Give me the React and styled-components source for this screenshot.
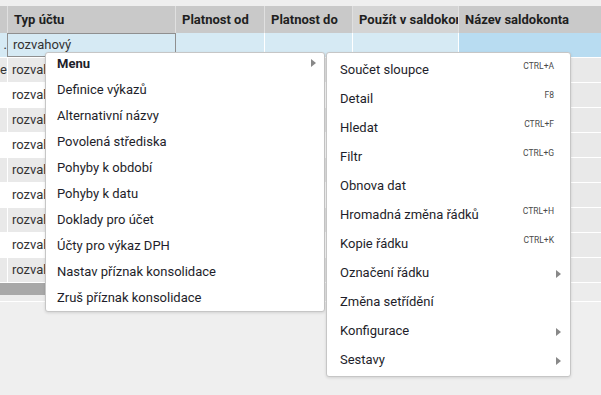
import React from 'react';
import styled, { createGlobalStyle } from 'styled-components';

const GlobalStyle = createGlobalStyle`
    html, body {
        margin: 0;
        padding: 0;
        background: #efefef;
    }
    body {
        font-family: Roboto, "Open Sans", "DejaVu Sans", sans-serif;
        font-size: 13px;
        color: #222;
    }
`;

const sloupce = [
    { id: 'c0', nazev: '', sirka: 8 },
    { id: 'typ', nazev: 'Typ účtu', sirka: 168 },
    { id: 'od', nazev: 'Platnost od', sirka: 89 },
    { id: 'do', nazev: 'Platnost do', sirka: 88 },
    { id: 'saldo', nazev: 'Použít v saldokontu', sirka: 106, svetly: true },
    { id: 'nazev', nazev: 'Název saldokonta', sirka: 0 },
];

const radky = [
    { c0: '.', typ: 'rozvahový' },
    { c0: 'e', typ: 'rozvahový' },
    { c0: '', typ: 'rozvahový' },
    { c0: '', typ: 'rozvahový' },
    { c0: '', typ: 'rozvahový' },
    { c0: '', typ: 'rozvahový' },
    { c0: '', typ: 'rozvahový' },
    { c0: '', typ: 'rozvahový' },
    { c0: '', typ: 'rozvahový' },
    { c0: '', typ: 'rozvahový' },
];

const menuLevo = [
    'Definice výkazů',
    'Alternativní názvy',
    'Povolená střediska',
    'Pohyby k období',
    'Pohyby k datu',
    'Doklady pro účet',
    'Účty pro výkaz DPH',
    'Nastav příznak konsolidace',
    'Zruš příznak konsolidace',
];

const menuPravo = [
    { text: 'Součet sloupce', zkratka: 'CTRL+A' },
    { text: 'Detail', zkratka: 'F8' },
    { text: 'Hledat', zkratka: 'CTRL+F' },
    { text: 'Filtr', zkratka: 'CTRL+G' },
    { text: 'Obnova dat' },
    { text: 'Hromadná změna řádků', zkratka: 'CTRL+H' },
    { text: 'Kopie řádku', zkratka: 'CTRL+K' },
    { text: 'Označení řádku', podmenu: true },
    { text: 'Změna setřídění' },
    { text: 'Konfigurace', podmenu: true },
    { text: 'Sestavy', podmenu: true },
];

const App = () => {
    return (
        <>
            <GlobalStyle />
            <Stranka>
                <Tabulka>
                    <Hlavicka>
                        {sloupce.map((s) => (
                            <HlavickaBunka
                                key={s.id}
                                $sirka={s.sirka}
                                $svetly={s.svetly}
                                $uzka={s.id === 'c0'}
                            >
                                {s.nazev}
                            </HlavickaBunka>
                        ))}
                    </Hlavicka>
                    {radky.map((r, i) => (
                        <Radek key={i} $vybrany={i === 0} $sudy={i % 2 === 1}>
                            {sloupce.map((s) => (
                                <Bunka
                                    key={s.id}
                                    $sirka={s.sirka}
                                    $posledni={s.id === 'nazev'}
                                    $zamereny={i === 0 && s.id === 'typ'}
                                    $vpravo={s.id === 'c0'}
                                >
                                    {r[s.id]}
                                </Bunka>
                            ))}
                        </Radek>
                    ))}
                    <Posuvnik>
                        <Jezdec />
                    </Posuvnik>
                </Tabulka>

                <MenuVrstva>
                    <Menu $sirka={280}>
                        <HlavniPolozka>
                            Menu
                            <Sipka $nahore />
                        </HlavniPolozka>
                        {menuLevo.map((t) => (
                            <Polozka key={t}>{t}</Polozka>
                        ))}
                    </Menu>
                    <Menu $sirka={245} $odsazeni>
                        {menuPravo.map((p) => (
                            <PolozkaVelka key={p.text}>
                                <span>{p.text}</span>
                                {p.zkratka && <Zkratka>{p.zkratka}</Zkratka>}
                                {p.podmenu && <Sipka />}
                            </PolozkaVelka>
                        ))}
                    </Menu>
                </MenuVrstva>
            </Stranka>
        </>
    );
}

const Stranka = styled.div`
    position: relative;
    width: 601px;
    height: 395px;
    overflow: hidden;
    background: #efefef;
    padding-top: 6px;
    box-sizing: border-box;
`;

const Tabulka = styled.div`
    display: flex;
    flex-direction: column;
`;

const Hlavicka = styled.div`
    display: flex;
    height: 27px;
    background: #c9c9c9;
`;

const HlavickaBunka = styled.div`
    flex: ${(p) => (p.$sirka ? `0 0 ${p.$sirka}px` : '1 1 auto')};
    min-width: 0;
    box-sizing: border-box;
    padding: ${(p) => (p.$uzka ? '0' : '1px 6px 0')};
    line-height: 26px;
    font-weight: bold;
    color: #1f1f1f;
    white-space: nowrap;
    overflow: hidden;
    border-right: 1px solid #e0e0e0;
    background: ${(p) => (p.$svetly ? '#d4d4d4' : 'transparent')};

    &:last-child {
        border-right: none;
    }
`;

const Radek = styled.div`
    display: flex;
    height: 25px;
    box-sizing: border-box;
    border-bottom: 1px solid #fff;
    background: ${(p) => (p.$vybrany ? '#d6eaf4' : p.$sudy ? '#e9e9e9' : '#fff')};
    --posledni: ${(p) => (p.$vybrany ? '#b8dcf1' : '#e9e9e9')};
`;

const Bunka = styled.div`
    flex: ${(p) => (p.$sirka ? `0 0 ${p.$sirka}px` : '1 1 auto')};
    min-width: 0;
    box-sizing: border-box;
    padding: 1px 4px 0;
    line-height: 22px;
    color: #333;
    white-space: nowrap;
    overflow: hidden;
    border-right: 1px solid #fff;
    background: ${(p) => (p.$posledni ? 'var(--posledni)' : 'transparent')};
    text-align: ${(p) => (p.$vpravo ? 'right' : 'left')};
    ${(p) => p.$vpravo && 'padding: 1px 0 0; direction: rtl;'}
    ${(p) => p.$zamereny && `
        border: 1px solid #8f8f8f;
        margin-left: -1px;
        flex-basis: ${p.$sirka + 1}px;
        padding: 0 5px;
    `}

    &:last-child {
        border-right: none;
    }
`;

const Posuvnik = styled.div`
    height: 19px;
    box-sizing: border-box;
    background: #ececec;
    border-bottom: 1px solid #fff;
`;

const Jezdec = styled.div`
    width: 300px;
    height: 12px;
    background: #a8a8a8;
`;

const MenuVrstva = styled.div`
    position: absolute;
    left: 45px;
    top: 52px;
    display: flex;
    align-items: flex-start;
    gap: 1px;
`;

const Menu = styled.div`
    width: ${(p) => p.$sirka}px;
    box-sizing: border-box;
    background: #fff;
    border: 1px solid #c6c6c6;
    border-radius: 3px;
    box-shadow: 0 1px 3px rgba(0, 0, 0, 0.12);
    padding: ${(p) => (p.$odsazeni ? '2px 0' : '0')};
`;

const Polozka = styled.div`
    height: 26px;
    line-height: 26px;
    padding: 0 8px 0 11px;
    color: #1e1e2a;
    white-space: nowrap;
`;

const HlavniPolozka = styled(Polozka)`
    display: flex;
    justify-content: space-between;
    height: 24px;
    line-height: 21px;
    font-weight: bold;
`;

const PolozkaVelka = styled.div`
    display: flex;
    justify-content: space-between;
    align-items: center;
    height: 29px;
    line-height: 29px;
    padding: 0 9px 0 13px;
    color: #1e1e2a;
    white-space: nowrap;
`;

const Zkratka = styled.span`
    align-self: flex-start;
    padding-top: 7px;
    margin-right: 7px;
    font-size: 8.5px;
    line-height: 1;
    color: #4a4a4a;
`;

const Sipka = styled.span`
    width: 0;
    height: 0;
    border-left: 5px solid #888;
    border-top: 4px solid transparent;
    border-bottom: 4px solid transparent;
    margin-top: 2px;
    ${(p) => p.$nahore && 'align-self: flex-start; margin-top: 6px;'}
`;

export default App;
